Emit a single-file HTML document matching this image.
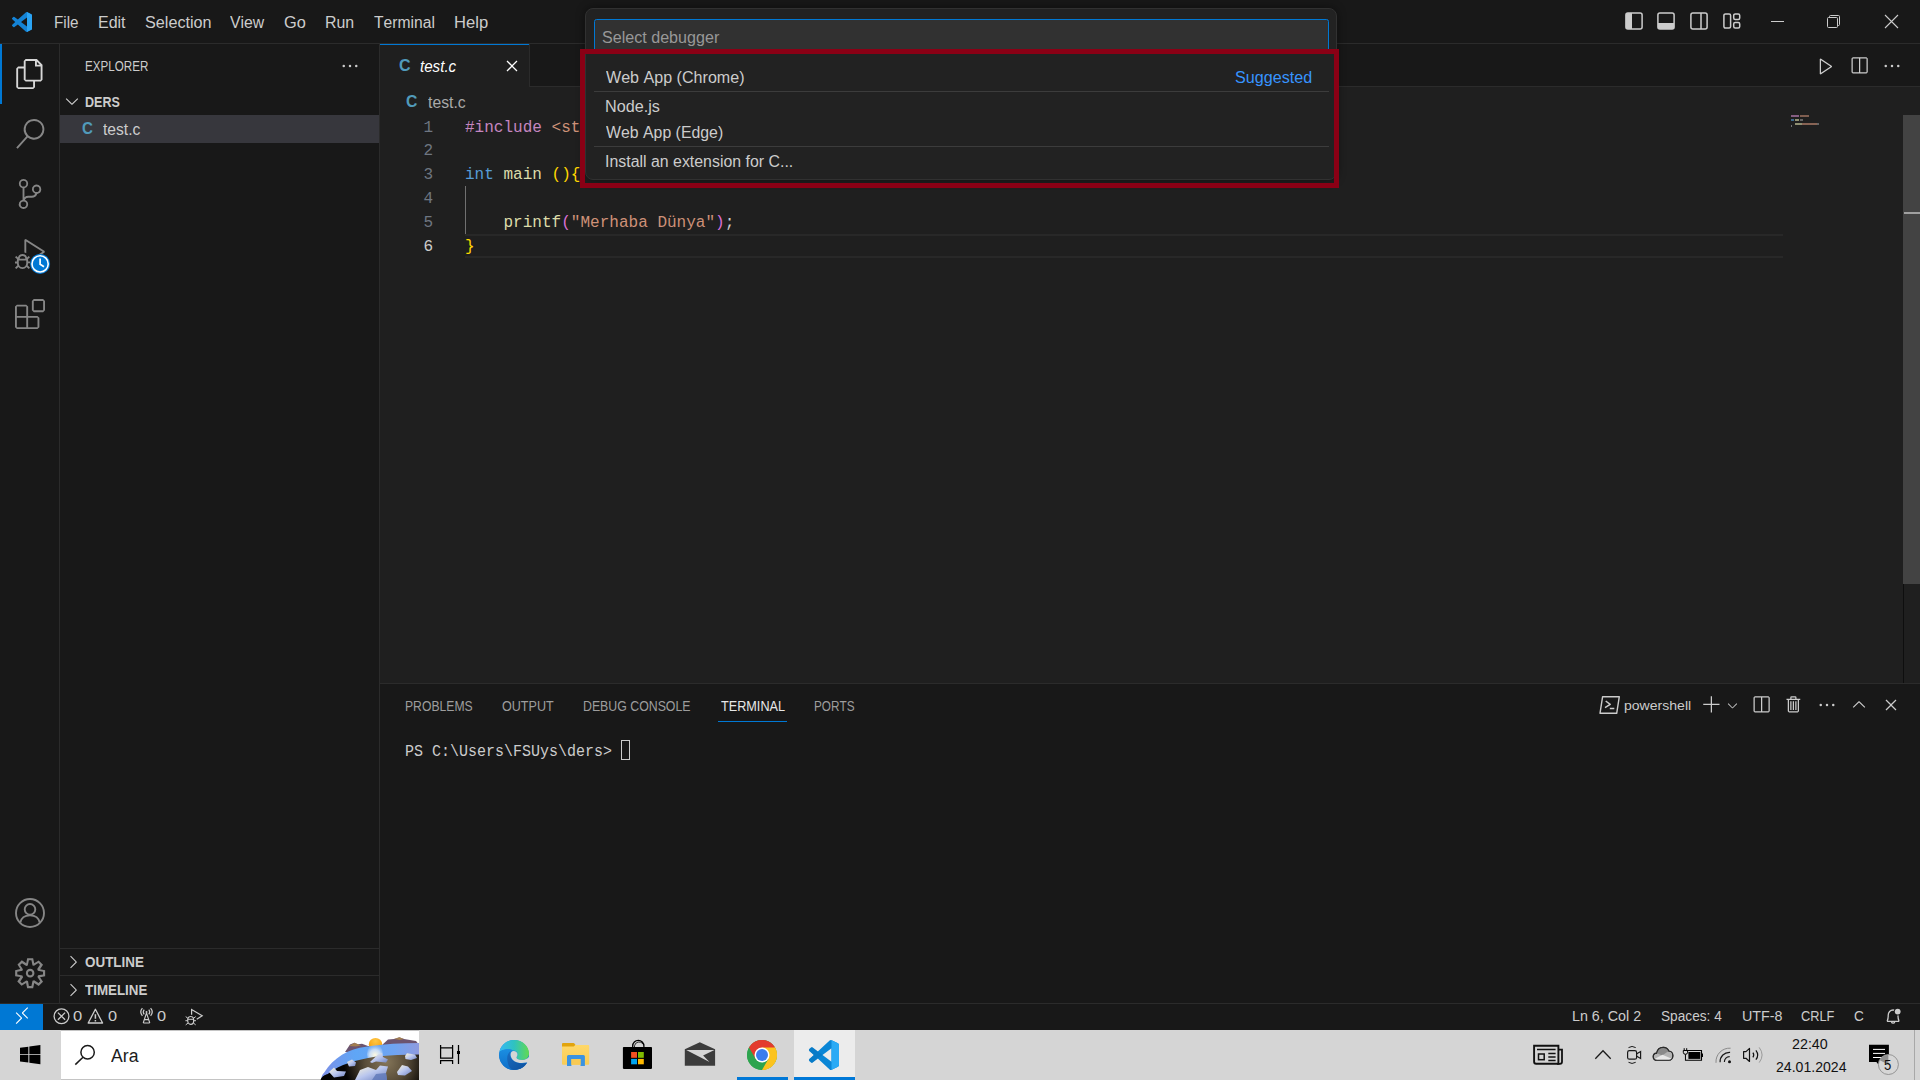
<!DOCTYPE html>
<html>
<head>
<meta charset="utf-8">
<title>test.c - ders - Visual Studio Code</title>
<style>
html,body{margin:0;padding:0;}
body{width:1920px;height:1080px;overflow:hidden;background:#181818;position:relative;font-family:"Liberation Sans",sans-serif;font-kerning:none;font-variant-ligatures:none;}
.a{position:absolute;}
.t{position:absolute;white-space:pre;line-height:24px;height:24px;transform-origin:0 0;}
.m{position:absolute;white-space:pre;line-height:24px;height:24px;transform-origin:0 0;font-family:"Liberation Mono",monospace;font-size:16.8px;transform:scaleX(0.955);color:#cccccc;}
.ln{position:absolute;white-space:pre;line-height:24px;height:24px;transform-origin:100% 0;font-family:"Liberation Mono",monospace;font-size:16.8px;transform:scaleX(0.955);color:#6e7681;text-align:right;width:40px;left:393.4px;}
.tm{position:absolute;white-space:pre;line-height:24px;height:24px;transform-origin:0 0;font-family:"Liberation Mono",monospace;font-size:16.6px;transform:scaleX(0.9036);color:#cccccc;}
svg{position:absolute;overflow:visible;}
</style>
</head>
<body>
<!-- ===== VS Code chrome ===== -->
<div class="a" style="left:0;top:0;width:1920px;height:43px;background:#181818;border-bottom:1px solid #2b2b2b;"></div>
<!-- activity bar -->
<div class="a" style="left:0;top:44px;width:59px;height:959px;background:#181818;border-right:1px solid #2b2b2b;"></div>
<div class="a" style="left:0;top:44px;width:2px;height:60px;background:#0078d4;"></div>
<!-- sidebar -->
<div class="a" style="left:60px;top:44px;width:319px;height:959px;background:#181818;border-right:1px solid #2b2b2b;"></div>
<div class="a" style="left:60px;top:115px;width:319px;height:28px;background:#37373d;"></div>
<div class="a" style="left:60px;top:948px;width:319px;height:1px;background:#2b2b2b;"></div>
<div class="a" style="left:60px;top:975px;width:319px;height:1px;background:#2b2b2b;"></div>
<!-- editor group -->
<div class="a" style="left:380px;top:44px;width:1540px;height:42px;background:#181818;border-bottom:1px solid #2b2b2b;"></div>
<div class="a" style="left:380px;top:44px;width:149px;height:43px;background:#1f1f1f;border-right:1px solid #2b2b2b;"></div>
<div class="a" style="left:380px;top:44px;width:149px;height:1px;background:#0078d4;"></div>
<div class="a" style="left:380px;top:87px;width:1540px;height:596px;background:#1f1f1f;"></div>
<!-- current line highlight -->
<div class="a" style="left:465px;top:234px;width:1318px;height:20px;border-top:2px solid #282828;border-bottom:2px solid #282828;"></div>
<!-- indent guide -->
<div class="a" style="left:465px;top:186px;width:1px;height:48px;background:#707070;"></div>
<!-- scrollbar -->
<div class="a" style="left:1903px;top:584px;width:1px;height:99px;background:#0e0e0e;"></div>
<div class="a" style="left:1903px;top:115px;width:17px;height:469px;background:#434343;"></div>
<div class="a" style="left:1904px;top:212px;width:16px;height:2px;background:#a0a0a0;"></div>
<!-- minimap -->
<div class="a" style="left:1791px;top:115px;width:8px;height:2px;background:#c586c0;opacity:.62"></div>
<div class="a" style="left:1800px;top:115px;width:9px;height:2px;background:#ce9178;opacity:.55"></div>
<div class="a" style="left:1791px;top:119px;width:3px;height:2px;background:#569cd6;opacity:.6"></div>
<div class="a" style="left:1795px;top:119px;width:4px;height:2px;background:#dcdcaa;opacity:.6"></div>
<div class="a" style="left:1800px;top:119px;width:3px;height:2px;background:#cccccc;opacity:.4"></div>
<div class="a" style="left:1795px;top:123px;width:7px;height:2px;background:#dcdcaa;opacity:.6"></div>
<div class="a" style="left:1802px;top:123px;width:15px;height:2px;background:#ce9178;opacity:.6"></div>
<div class="a" style="left:1817px;top:123px;width:2px;height:2px;background:#cccccc;opacity:.4"></div>
<div class="a" style="left:1791px;top:125px;width:1px;height:2px;background:#cccccc;opacity:.5"></div>

<!-- code -->
<div class="ln" style="top:115.5px;">1</div>
<div class="ln" style="top:139.25px;">2</div>
<div class="ln" style="top:163px;">3</div>
<div class="ln" style="top:186.75px;">4</div>
<div class="ln" style="top:210.5px;">5</div>
<div class="ln" style="top:234.75px;color:#cccccc;">6</div>
<div class="m" style="left:465px;top:115.5px;"><span style="color:#c586c0">#include</span> <span style="color:#ce9178">&lt;stdio.h&gt;</span></div>
<div class="m" style="left:465px;top:163px;"><span style="color:#569cd6">int</span> <span style="color:#dcdcaa">main</span> <span style="color:#ffd700">(){</span></div>
<div class="m" style="left:465px;top:210.5px;">    <span style="color:#dcdcaa">printf</span><span style="color:#da70d6">(</span><span style="color:#ce9178">"Merhaba Dünya"</span><span style="color:#da70d6">)</span>;</div>
<div class="m" style="left:465px;top:234.75px;"><span style="color:#ffd700">}</span></div>

<!-- panel -->
<div class="a" style="left:380px;top:683px;width:1540px;height:320px;background:#181818;border-top:1px solid #2b2b2b;box-sizing:border-box;"></div>
<div class="a" style="left:718px;top:721px;width:69px;height:1px;background:#0078d4;"></div>
<div class="tm" style="left:405px;top:739.5px;">PS C:\Users\FSUys\ders&gt; </div>
<div class="a" style="left:621px;top:740px;width:7px;height:18px;border:1px solid #cccccc;box-sizing:content-box;"></div>

<!-- status bar -->
<div class="a" style="left:0;top:1003px;width:1920px;height:27px;background:#181818;border-top:1px solid #2b2b2b;box-sizing:border-box;"></div>
<div class="a" style="left:0;top:1004px;width:43px;height:26px;background:#0078d4;"></div>

<!-- ===== quick pick ===== -->
<div class="a" style="left:585px;top:8px;width:752px;height:172px;background:#222222;border:1px solid #313131;border-radius:8px;box-sizing:border-box;box-shadow:0 0 10px rgba(0,0,0,.45);"></div>
<div class="a" style="left:594px;top:19px;width:735px;height:34px;background:#313131;border:1px solid #0078d4;border-radius:2.5px;box-sizing:border-box;"></div>
<div class="a" style="left:594px;top:91px;width:735px;height:1px;background:#3c3c3c;"></div>
<div class="a" style="left:594px;top:146px;width:735px;height:1px;background:#3c3c3c;"></div>
<!-- red annotation -->
<div class="a" style="left:580px;top:49px;width:759px;height:139px;border:5px solid #8a0015;box-sizing:border-box;"></div>

<!-- ===== Windows taskbar ===== -->
<div class="a" style="left:0;top:1030px;width:1920px;height:50px;background:#d5d5d5;"></div>
<div class="a" style="left:61px;top:1031px;width:358px;height:48px;background:#ffffff;"></div>
<div class="a" style="left:794px;top:1030px;width:61px;height:50px;background:#ececec;"></div>
<div class="a" style="left:794px;top:1077px;width:61px;height:3px;background:#0078d7;"></div>
<div class="a" style="left:737px;top:1077px;width:51px;height:3px;background:#0078d7;"></div>
<div class="a" style="left:1914px;top:1030px;width:1px;height:50px;background:#a8a8a8;"></div>

<!-- vscode logo title bar -->
<svg style="left:12px;top:12px" width="20" height="20" viewBox="0 0 100 100">
<path fill="#1483d6" d="M96.46 10.8L75.86.88a6.2 6.2 0 0 0-7.1 1.2L29.27 38.08 12.07 25.04a4.2 4.2 0 0 0-5.32.24L1.24 30.3a4.2 4.2 0 0 0 0 6.17L16.15 50 1.23 63.54a4.2 4.2 0 0 0 0 6.17l5.52 5.02a4.2 4.2 0 0 0 5.32.24l17.2-13.05 39.48 36a6.2 6.2 0 0 0 7.1 1.2l20.62-9.92A6.25 6.25 0 0 0 100 83.56V16.44c0-2.4-1.370-4.600-3.540-5.640zM75.020 72.700L45.060 50l29.960-22.700v45.400z"/>
<path fill="#2ba4f4" d="M75.02 27.3V.6l21.44 10.2c2.170 1.040 3.540 3.240 3.540 5.640v67.120c0 2.400-1.360 4.600-3.530 5.640L75.020 99.400V72.700z"/>
</svg>
<!-- activity bar icons (codicons 24 -> 30px) -->
<svg style="left:15px;top:59px" width="30" height="30" viewBox="0 0 24 24"><path fill="#d7d7d7" d="M17.5 0h-9L7 1.5V6H2.500L1 7.500v15.070L2.500 24h12.070L16 22.570V18h4.700l1.300-1.430V4.500L17.500 0zm0 2.120l2.380 2.380H17.500V2.120zm-3 20.380h-12v-15H7v9.070L8.500 18h6v4.500zm6-6h-12v-15H16V6h4.500v10.500z"/></svg>
<svg style="left:15px;top:119px" width="30" height="30" viewBox="0 0 24 24"><path fill="#868686" d="M15.250 0a8.250 8.250 0 0 0-6.180 13.720L1 22.880l1.120 1 8.050-9.120A8.251 8.251 0 1 0 15.250.010V0zm0 15a6.750 6.750 0 1 1 0-13.500 6.750 6.750 0 0 1 0 13.500z"/></svg>
<svg style="left:15px;top:179px" width="30" height="30" viewBox="0 0 24 24"><path fill="#868686" d="M21.007 8.222A3.738 3.738 0 0 0 15.045 5.200a3.737 3.737 0 0 0 1.156 6.583 2.988 2.988 0 0 1-2.668 1.670h-2.990a4.456 4.456 0 0 0-2.989 1.165V7.400a3.737 3.737 0 1 0-1.494 0v9.117a3.776 3.776 0 1 0 1.816.099 2.990 2.990 0 0 1 2.668-1.667h2.990a4.484 4.484 0 0 0 4.223-3.039 3.736 3.736 0 0 0 3.250-3.687zM4.565 3.738a2.242 2.242 0 1 1 4.484 0 2.242 2.242 0 0 1-4.484 0zm4.484 16.441a2.242 2.242 0 1 1-4.484 0 2.242 2.242 0 0 1 4.484 0zm8.221-9.715a2.242 2.242 0 1 1 0-4.485 2.242 2.242 0 0 1 0 4.485z"/></svg>
<svg style="left:15px;top:239px" width="30" height="30" viewBox="0 0 24 24"><path fill="#868686" d="M10.940 13.500l-1.320 1.320a3.730 3.730 0 0 0-7.240 0L1.060 13.500 0 14.560l1.720 1.720-.220.220V18H0v1.500h1.500v.080c.077.489.214.966.410 1.420L0 22.940 1.060 24l1.650-1.650A4.308 4.308 0 0 0 6 24a4.310 4.310 0 0 0 3.290-1.650L10.940 24 12 22.940 10.090 21c.198-.464.336-.951.410-1.450v-.100H12V18h-1.500v-1.500l-.220-.220L12 14.560l-1.060-1.060zM6 13.500a2.250 2.250 0 0 1 2.250 2.250h-4.500A2.250 2.250 0 0 1 6 13.500zm3 6a3.330 3.330 0 0 1-3 3 3.330 3.330 0 0 1-3-3v-2.250h6v2.250zm14.760-9.900v1.260L13.500 17.370V15.600l8.500-5.370L9 2v9.460a5.070 5.070 0 0 0-1.500-.720V.630L8.640 0l15.120 9.600z"/></svg>
<!-- debug badge (clock) -->
<svg style="left:29px;top:253px" width="22" height="22" viewBox="0 0 22 22"><circle cx="11.100" cy="10.900" r="10" fill="#0078d4"/><circle cx="11.100" cy="10.900" r="8.100" fill="none" stroke="#ffffff" stroke-width="1.600"/><path d="M11.100 5.600V11.300L15 13.800" fill="none" stroke="#ffffff" stroke-width="1.700"/></svg>
<svg style="left:15px;top:299px" width="30" height="30" viewBox="0 0 24 24"><path fill="#868686" d="M13.500 1.500L15 0h7.500L24 1.500V9l-1.500 1.500H15L13.500 9V1.500zm1.500 0V9h7.500V1.500H15zM0 15V6l1.500-1.500H9L10.500 6v7.500H18l1.500 1.500v7.500L18 24H1.500L0 22.500V15zm9-1.500V6H1.500v7.500H9zM9 15H1.500v7.500H9V15zm1.500 7.500H18V15h-7.500v7.500z"/></svg>
<!-- account -->
<svg style="left:15px;top:898px" width="30" height="30" viewBox="0 0 30 30" fill="none" stroke="#868686" stroke-width="1.900"><circle cx="15" cy="15" r="14"/><circle cx="15" cy="11.300" r="5.300"/><path d="M5.300 24.600C6.300 19.700 10 17.400 15 17.400s8.700 2.300 9.700 7.200"/></svg>
<!-- settings gear -->
<svg style="left:12.850px;top:955.850px" width="34.300" height="34.300" viewBox="0 0 16 16"><path fill="#868686" d="M9.100 4.400L8.600 2H7.400l-.500 2.400-.700.300-2-1.300-.900.800 1.300 2-.200.700-2.400.500v1.200l2.400.500.300.800-1.300 2 .800.800 2-1.300.800.300.400 2.300h1.200l.500-2.400.800-.300 2 1.300.800-.800-1.300-2 .300-.800 2.300-.400V7.400l-2.400-.500-.300-.800 1.300-2-.800-.800-2 1.300-.700-.200zM9.400 1l.500 2.400L12 2.100l2 2-1.400 2.100 2.400.400v2.800l-2.400.500L14 12l-2 2-2.100-1.400-.500 2.400H6.600l-.500-2.400L4 13.900l-2-2 1.400-2.100L1 9.400V6.600l2.400-.500L2.100 4l2-2 2.100 1.400.400-2.400h2.800zm.600 7c0 1.100-.900 2-2 2s-2-.900-2-2 .900-2 2-2 2 .900 2 2zM8 9c.600 0 1-.400 1-1s-.400-1-1-1-1 .400-1 1 .400 1 1 1z"/></svg>
<!-- sidebar ... -->
<svg style="left:340px;top:56px" width="20" height="20" viewBox="0 0 16 16"><path fill="#cccccc" d="M4 8a1 1 0 1 1-2 0 1 1 0 0 1 2 0zm5 0a1 1 0 1 1-2 0 1 1 0 0 1 2 0zm5 0a1 1 0 1 1-2 0 1 1 0 0 1 2 0z"/></svg>
<!-- chevrons -->
<svg style="left:62px;top:90.500px" width="20" height="20" viewBox="0 0 16 16"><path fill="#cccccc" d="M7.976 10.072l4.357-4.357.620.618L8.284 11h-.618L3 6.333l.619-.618 4.357 4.357z"/></svg>
<svg style="left:62.500px;top:952px" width="20" height="20" viewBox="0 0 16 16"><path fill="#cccccc" d="M10.072 8.024L5.715 3.667l.618-.620L11 7.716v.618L6.333 13l-.618-.619 4.357-4.357z"/></svg>
<svg style="left:62.500px;top:980px" width="20" height="20" viewBox="0 0 16 16"><path fill="#cccccc" d="M10.072 8.024L5.715 3.667l.618-.620L11 7.716v.618L6.333 13l-.618-.619 4.357-4.357z"/></svg>
<!-- title bar layout controls -->
<svg style="left:1625px;top:12px" width="18" height="18" viewBox="0 0 18 18"><rect x="0.900" y="0.900" width="16.200" height="16.200" rx="2" fill="none" stroke="#cccccc" stroke-width="1.500"/><path d="M1 2.500Q1 1 2.500 1H7V17H2.500Q1 17 1 15.500z" fill="#cccccc"/></svg>
<svg style="left:1657px;top:12px" width="18" height="18" viewBox="0 0 18 18"><rect x="0.900" y="0.900" width="16.200" height="16.200" rx="2" fill="none" stroke="#cccccc" stroke-width="1.500"/><path d="M1 11H17V15.500Q17 17 15.500 17H2.500Q1 17 1 15.500z" fill="#cccccc"/></svg>
<svg style="left:1690px;top:12px" width="18" height="18" viewBox="0 0 18 18"><rect x="0.900" y="0.900" width="16.200" height="16.200" rx="2" fill="none" stroke="#cccccc" stroke-width="1.500"/><path d="M11 1V17" stroke="#cccccc" stroke-width="1.500"/></svg>
<svg style="left:1723px;top:13px" width="18" height="16" viewBox="0 0 18 16" fill="none" stroke="#cccccc" stroke-width="1.500"><rect x="0.900" y="0.900" width="6.700" height="14.200" rx="1.500"/><rect x="10.700" y="0.900" width="6" height="5.500" rx="1.500"/><rect x="10.700" y="9.600" width="6" height="5.500" rx="1.500"/></svg>
<!-- window controls -->
<div class="a" style="left:1771px;top:21px;width:13px;height:1px;background:#cccccc;"></div>
<svg style="left:1827px;top:15px" width="13" height="13" viewBox="0 0 13 13" fill="none" stroke="#cccccc" stroke-width="1"><rect x="0.500" y="2.500" width="10" height="10" rx="1"/><path d="M2.500 2.500V1.500Q2.500 .500 3.500 .500H11.500Q12.500 .500 12.500 1.500V9.500Q12.500 10.500 11.500 10.500H10.500"/></svg>
<svg style="left:1885px;top:15px" width="13" height="13" viewBox="0 0 13 13" fill="none" stroke="#cccccc" stroke-width="1.100"><path d="M0 0L13 13M13 0L0 13"/></svg>
<!-- tab close -->
<svg style="left:501.500px;top:56px" width="20" height="20" viewBox="0 0 16 16"><path fill="#ffffff" d="M8 8.707l3.646 3.647.708-.707L8.707 8l3.647-3.646-.707-.708L8 7.293 4.354 3.646l-.707.708L7.293 8l-3.646 3.646.707.708L8 8.707z"/></svg>
<!-- editor actions -->
<svg style="left:1816px;top:56px" width="20" height="20" viewBox="0 0 16 16"><path fill="#cccccc" d="M3.780 2L3 2.410v12l.780.420 9-6V8l-9-6zM4 13.480V3.350l7.600 5.070L4 13.480z"/></svg>
<svg style="left:1849px;top:55.500px" width="20" height="20" viewBox="0 0 16 16"><path fill="#cccccc" d="M14 1H3L2 2v11l1 1h11l1-1V2l-1-1zM8 13H3V2h5v11zm6 0H9V2h5v11z"/></svg>
<svg style="left:1881.500px;top:56px" width="20" height="20" viewBox="0 0 16 16"><path fill="#cccccc" d="M4 8a1 1 0 1 1-2 0 1 1 0 0 1 2 0zm5 0a1 1 0 1 1-2 0 1 1 0 0 1 2 0zm5 0a1 1 0 1 1-2 0 1 1 0 0 1 2 0z"/></svg>
<!-- panel actions -->
<svg style="left:1599px;top:695px" width="22" height="20" viewBox="0 0 22 20" fill="none" stroke="#cccccc" stroke-width="1.400" stroke-linejoin="round"><path d="M3.600 1.700H20.300L17.700 18.300H1z"/><path d="M6.700 6L11.200 9.300L6 12.600M10.800 13.400H15.300" stroke-width="1.500"/></svg>
<svg style="left:1702px;top:694.500px" width="20" height="20" viewBox="0 0 16 16"><path fill="#cccccc" d="M14 7v1H8v6H7V8H1V7h6V1h1v6h6z"/></svg>
<svg style="left:1724.500px;top:697.500px" width="15" height="15" viewBox="0 0 16 16"><path fill="#cccccc" d="M7.976 10.072l4.357-4.357.620.618L8.284 11h-.618L3 6.333l.619-.618 4.357 4.357z"/></svg>
<svg style="left:1750.800px;top:694.500px" width="20" height="20" viewBox="0 0 16 16"><path fill="#cccccc" d="M14 1H3L2 2v11l1 1h11l1-1V2l-1-1zM8 13H3V2h5v11zm6 0H9V2h5v11z"/></svg>
<svg style="left:1784px;top:695px" width="20" height="20" viewBox="0 0 16 16"><path fill="#cccccc" d="M10 3h3v1h-1v9l-1 1H4l-1-1V4H2V3h3V2a1 1 0 0 1 1-1h3a1 1 0 0 1 1 1v1zM9 2H6v1h3V2zM4 13h7V4H4v9zm2-8H5v7h1V5zm1 0h1v7H7V5zm2 0h1v7H9V5z"/></svg>
<svg style="left:1816.500px;top:695px" width="20" height="20" viewBox="0 0 16 16"><path fill="#cccccc" d="M4 8a1 1 0 1 1-2 0 1 1 0 0 1 2 0zm5 0a1 1 0 1 1-2 0 1 1 0 0 1 2 0zm5 0a1 1 0 1 1-2 0 1 1 0 0 1 2 0z"/></svg>
<svg style="left:1849px;top:694.500px" width="20" height="20" viewBox="0 0 16 16"><path fill="#cccccc" d="M8.024 5.928l-4.357 4.357-.620-.618L7.716 5h.618L13 9.667l-.619.618-4.357-4.357z"/></svg>
<svg style="left:1881px;top:695px" width="20" height="20" viewBox="0 0 16 16"><path fill="#cccccc" d="M8 8.707l3.646 3.647.708-.707L8.707 8l3.647-3.646-.707-.708L8 7.293 4.354 3.646l-.707.708L7.293 8l-3.646 3.646.707.708L8 8.707z"/></svg>
<!-- status bar icons -->
<svg style="left:11.500px;top:1005.500px" width="20" height="20" viewBox="0 0 16 16"><path fill="#ffffff" d="M12.904 9.570L8.928 5.596l3.976-3.976-.619-.620L8 5.286v.619l4.285 4.285.620-.618zM3 5.620l4.072 4.050L3 13.745l.619.619L8 10v-.619L3.619 5 3 5.620z"/></svg>
<svg style="left:53px;top:1008px" width="17" height="17" viewBox="0 0 17 17" fill="none" stroke="#cccccc" stroke-width="1.300"><circle cx="8.500" cy="8.200" r="7.400"/><path d="M4.900 4.600L12.100 11.800M12.100 4.600L4.900 11.800"/></svg>
<svg style="left:87px;top:1007.500px" width="17" height="17" viewBox="0 0 17 17" fill="none" stroke="#cccccc" stroke-width="1.300" stroke-linejoin="round"><path d="M8.400 1.300L15.600 15H1.200z"/><path d="M8.400 6.300V10.800M8.400 11.900V13.400" stroke-width="1.500"/></svg>
<svg style="left:137.500px;top:1007px" width="17" height="17" viewBox="0 0 17 17" fill="none" stroke="#cccccc" stroke-width="1.200"><path d="M4.400 1.200Q1.100 5 4.400 8.800M12.600 1.200Q15.900 5 12.600 8.800M6.200 2.600Q4.300 5 6.200 7.400M10.800 2.600Q12.700 5 10.800 7.400"/><circle cx="8.500" cy="5" r="1" fill="#cccccc" stroke="none"/><path d="M8.500 6L5.200 16M8.500 6L11.800 16M6.300 12.600H10.700M5.200 16H11.800" stroke-width="1.100"/></svg>
<svg style="left:185px;top:1008px" width="19" height="18" viewBox="0 0 19 18" fill="none" stroke="#cccccc" stroke-width="1.200"><path d="M6.600 6.800V1.500L17.200 7.800L11.700 11.200"/><ellipse cx="5.700" cy="12.400" rx="3" ry="3.900"/><path d="M2.800 11.300H8.600M.700 8.600L2.900 10.300M10.700 8.600L8.500 10.300M.400 12.700H2.700M8.700 12.700H11M.700 16.900L3 15M10.700 16.900L8.400 15" stroke-width="1"/></svg>
<svg style="left:1884.500px;top:1007.500px" width="17" height="18" viewBox="0 0 17 18"><path d="M2.300 12.800C3.300 10.600 3.200 9.300 3.200 7.300C3.200 4.200 5.300 2 8.100 2C10.900 2 13 4.200 13 7.300C13 9.300 12.900 10.600 13.900 12.800L13.600 13.400H2.600z" fill="none" stroke="#cccccc" stroke-width="1.300" stroke-linejoin="round"/><path d="M6.400 14A1.800 1.800 0 0 0 9.800 14" fill="none" stroke="#cccccc" stroke-width="1.200"/><circle cx="12.700" cy="3.600" r="3.900" fill="#181818"/><circle cx="12.700" cy="3.600" r="2.900" fill="#cccccc"/></svg>
<!-- windows start -->
<svg style="left:19.800px;top:1045.400px" width="20.400" height="19.200" viewBox="0 0 87.300 87.600" preserveAspectRatio="none"><path fill="#000000" d="M0 12.500L35.700 7.600V42.100H0zM40 6.900L87.300 0V41.800H40zM0 45.700H35.700V80.300L0 75.300zM40 46H87.300V87.600L40 80.900z"/></svg>
<!-- search glass -->
<svg style="left:74px;top:1043px" width="24" height="24" viewBox="0 0 24 24" fill="none" stroke="#1a1a1a" stroke-width="1.500"><circle cx="13.600" cy="9.200" r="6.700"/><path d="M9 14.200L1.300 21.600"/></svg>
<!-- search box borders -->
<div class="a" style="left:61px;top:1030px;width:358px;height:1px;background:#c4c4c4;"></div>
<div class="a" style="left:61px;top:1079px;width:358px;height:1px;background:#c4c4c4;"></div>
<!-- scenic search highlight -->
<svg style="left:319px;top:1031px" width="100" height="48" viewBox="319 1031 100 48">
<defs>
<linearGradient id="gsky" x1="0" y1="0" x2="1" y2="0"><stop offset="0" stop-color="#7d8fe6"/><stop offset=".35" stop-color="#5fa6f6"/><stop offset=".75" stop-color="#6fa4f2"/><stop offset="1" stop-color="#8f9be0"/></linearGradient>
<radialGradient id="gglow" cx="375" cy="1055" r="11" gradientUnits="userSpaceOnUse"><stop offset="0" stop-color="#fffbe0"/><stop offset=".5" stop-color="#dfeaf6" stop-opacity=".8"/><stop offset="1" stop-color="#9cc4f6" stop-opacity="0"/></radialGradient>
<radialGradient id="ggrd" cx="386" cy="1062" r="42" gradientUnits="userSpaceOnUse"><stop offset="0" stop-color="#85765a"/><stop offset=".5" stop-color="#584c38"/><stop offset="1" stop-color="#060504"/></radialGradient>
<radialGradient id="gsun" cx="375.500" cy="1041" r="8" gradientUnits="userSpaceOnUse"><stop offset="0" stop-color="#ffc845"/><stop offset="1" stop-color="#f7a212"/></radialGradient>
<linearGradient id="gice" x1="0" y1="0" x2="1" y2="1"><stop offset="0" stop-color="#fdf6d8"/><stop offset=".5" stop-color="#b9c6ee"/><stop offset="1" stop-color="#6f82c0"/></linearGradient>
</defs>
<path d="M345 1052L350 1044.500L354.400 1042.700L358 1044.300L362 1043.700L368 1046L372 1046L372 1053z" fill="#6c5470"/>
<path d="M349 1046L354.400 1042.700L358 1044.300L361 1045.500L356 1046.500z" fill="#b08848" opacity=".8"/>
<path d="M381 1046L388 1039.500L394 1039L399.400 1037.300L404 1039L410 1040L416 1041L418 1043.500L419 1046z" fill="#6c5470"/>
<path d="M394 1039L399.400 1037.300L404 1039L400 1040z" fill="#b08848" opacity=".8"/>
<circle cx="375.500" cy="1044.600" r="6.700" fill="url(#gsun)"/>
<path d="M321 1080C321.500 1076 322.500 1074 324.400 1072.200C333 1058 349 1048.500 366 1046.700C384 1044 402 1043.200 419 1043.100V1080z" fill="url(#gsky)"/>
<ellipse cx="375" cy="1054" rx="8" ry="10" fill="url(#gglow)"/>
<path d="M320.600 1080C321.500 1077 324 1075 328 1074C340 1064 356 1060 375 1056.700C390 1055.300 405 1054.800 419 1054.600V1080z" fill="url(#ggrd)"/>
<path d="M320.600 1080C321.500 1077 324 1075 328 1074L333 1070L331 1080z" fill="#000000" opacity=".75"/>
<!-- ice -->
<path d="M370 1062L378 1054.500L382 1053L383 1057L388 1059.500L386 1062.500L376 1061.500L372 1063z" fill="url(#gice)"/>
<path d="M347 1062L352 1059.500L356 1062.500L355 1066L349 1066.500z" fill="url(#gice)"/>
<path d="M405 1056L407 1053.300L415 1054.500L417 1058L411 1060L405.500 1059z" fill="url(#gice)"/>
<path d="M329 1072L334 1067.500L337 1071L346 1071.500L344 1076L334 1077.500z" fill="url(#gice)"/>
<path d="M355 1080L360 1070L368 1067L376 1070L380 1065.500L388 1066.500L386 1073L387 1080z" fill="url(#gice)"/>
<path d="M372 1080L376 1074L386 1073L387 1080z" fill="#5f78b8" opacity=".8"/>
<path d="M397 1072L402 1065L408 1066.500L412 1071L405 1075.500L398 1075z" fill="url(#gice)"/>
</svg>
<!-- task view -->
<svg style="left:439px;top:1044px" width="22" height="21" viewBox="439 1044 22 21" fill="none" stroke="#000000" stroke-width="1.250"><path d="M440.600 1045V1047.800M452.600 1045V1047.800M440.600 1047.900H452.600V1058H440.600zM440.600 1064V1060.600H452.600V1064M458.500 1045V1064"/><rect x="457" y="1051" width="3" height="3" fill="#000000" stroke="none"/></svg>
<!-- edge -->
<svg style="left:499px;top:1040px" width="30" height="30" viewBox="0 0 30 30">
<defs>
<linearGradient id="ge1" x1="0" y1="0" x2="1" y2="0"><stop offset="0" stop-color="#35b8f4"/><stop offset=".5" stop-color="#2fc2c0"/><stop offset="1" stop-color="#62da50"/></linearGradient>
<linearGradient id="ge2" x1="0" y1="0" x2="0" y2="1"><stop offset="0" stop-color="#1b8fe2"/><stop offset="1" stop-color="#0f6ec8"/></linearGradient>
<linearGradient id="ge3" x1="0" y1="0" x2="1" y2="1"><stop offset="0" stop-color="#1a6cc0"/><stop offset="1" stop-color="#0c4f9c"/></linearGradient>
</defs>
<circle cx="15" cy="15" r="15" fill="url(#ge2)"/>
<path d="M.400 12C1.800 5 7.800 0 15 0C23.500 0 30 6.300 30 13.300C30 17.400 27 20 23.200 20C19.500 20 17.600 18.600 17.600 17.500C17.600 16.600 18.600 16.300 18.600 14.200C18.600 12 16.600 10.400 14 10.400C8 9 2 10 .400 12z" fill="url(#ge1)"/>
<path d="M8.200 18.500C8.200 13.500 11 10.400 14 10.400C10 7.500 1 9.500 .300 13.500C-.500 22 6 30 15 30C21.500 30 25.800 26.500 28 22.800C24 25 18 25.500 14.500 24.500C10.500 23.300 8.200 21.500 8.200 18.500z" fill="url(#ge2)"/>
<path d="M8.200 18.500C8.200 15.300 9.500 13 11.200 11.600C10.300 14 10.800 17.500 13.500 20C17 23.200 23.500 24.300 28 22.800C25.800 26.500 21.500 30 15 30C10 29.500 8.200 23 8.200 18.500z" fill="url(#ge3)"/>
<path d="M11.600 14.600C11.600 12.400 12.700 10.900 14.600 10.900C16.800 10.900 18.500 12.300 18.500 14.200C18.500 16.200 17.500 16.600 17.500 17.500C17.500 18.800 19.700 20 23.200 20C26 20 28.600 18.800 30.500 16.500L31 20.800C27 23.800 19 23.600 15.500 21.300C12.600 19.500 11.600 17 11.600 14.600z" fill="#d6d6d6"/>
</svg>
<!-- folder -->
<svg style="left:562px;top:1043px" width="28" height="24" viewBox="562 1043 28 24">
<defs><linearGradient id="gfo" x1="0" y1="0" x2="0" y2="1"><stop offset="0" stop-color="#ffd869"/><stop offset="1" stop-color="#f9cc56"/></linearGradient></defs>
<path d="M562 1044Q562 1043.100 563 1043.100H573.500Q574.200 1043.100 574.800 1044L575.500 1045V1047H562z" fill="#e2a40d"/>
<path d="M562 1046.600H573.800L575.300 1045H588.300Q589.200 1045 589.200 1046V1063.800Q589.200 1064.700 588.300 1064.700H563Q562 1064.700 562 1063.800z" fill="url(#gfo)"/>
<path d="M567 1066.100V1056.600Q567 1055.100 568.500 1055.100H583.400Q584.900 1055.100 584.900 1056.600V1066.100H580.500V1059H571.400V1066.100z" fill="#3b93e1"/>
<rect x="571.400" y="1059" width="9.100" height="5.700" fill="#f8ca55"/>
</svg>
<!-- store -->
<svg style="left:622px;top:1039px" width="31" height="31" viewBox="622 1039 31 31">
<path d="M632.700 1047V1046A5.600 5.600 0 0 1 643.900 1046V1047" fill="none" stroke="#000000" stroke-width="1.300"/>
<path d="M634.500 1047V1045.800A4.700 4.700 0 0 1 643 1044" fill="none" stroke="#000000" stroke-width=".800"/>
<rect x="622.900" y="1047" width="29.100" height="21.900" rx=".800" fill="#000000"/>
<rect x="631.100" y="1052" width="5.900" height="5.800" fill="#f25022"/><rect x="638" y="1052" width="5.800" height="5.800" fill="#7fba00"/>
<rect x="631.100" y="1058.900" width="5.900" height="5.400" fill="#00a4ef"/><rect x="638" y="1058.900" width="5.800" height="5.400" fill="#ffb900"/>
</svg>
<!-- mail -->
<svg style="left:684px;top:1041px" width="32" height="26" viewBox="684 1041 32 26">
<path d="M684.800 1049.200L699.800 1042.200L715.100 1049.200V1065.800H684.800z" fill="#3c3c3c"/>
<path d="M686.200 1050.100H714.400L703.100 1055.600L709.500 1061.900z" fill="#d6d6d6"/>
</svg>
<!-- chrome -->
<svg style="left:747px;top:1040px" width="30" height="30" viewBox="-15 -15 30 30">
<circle r="15" fill="#2da44e"/>
<path d="M0 0L-12.990 -7.500A15 15 0 0 1 12.990 -7.500z" fill="#e33b2e"/>
<path d="M-12.990 -7.500A15 15 0 0 1 12.990 -7.500H0z" fill="#e33b2e"/>
<path d="M12.990 -7.500A15 15 0 0 1 0 15L0 0z" fill="#fcc31e"/>
<path d="M0 15A15 15 0 0 1 -12.990 -7.500L0 0z" fill="#2da44e"/>
<path d="M12.990 -7.500H0L6.500 3.750L0 15A15 15 0 0 0 12.990 -7.500z" fill="#fcc31e"/>
<path d="M-12.990 -7.500L-6.500 3.750L0 15L6.500 3.750H-6.500z" fill="#2da44e"/>
<path d="M-12.990 -7.500L-6.500 3.750L0 -7.500z" fill="#e33b2e"/>
<circle r="7.500" fill="#ffffff"/>
<circle r="6" fill="#3b7ded"/>
</svg>
<!-- vscode taskbar -->
<svg style="left:809px;top:1040px" width="30" height="30" viewBox="0 0 100 100">
<path fill="#0a86d6" d="M96.460 10.800L75.860.880a6.200 6.200 0 0 0-7.100 1.200L29.270 38.080 12.070 25.040a4.200 4.200 0 0 0-5.320.240L1.240 30.300a4.200 4.200 0 0 0 0 6.170L16.150 50 1.230 63.540a4.200 4.200 0 0 0 0 6.170l5.520 5.020a4.200 4.200 0 0 0 5.320.240l17.200-13.050 39.480 36a6.200 6.200 0 0 0 7.100 1.200l20.620-9.920A6.250 6.250 0 0 0 100 83.560V16.440c0-2.400-1.370-4.600-3.540-5.640zM75.020 72.700L45.060 50l29.960-22.700v45.400z"/>
<path fill="#0572bd" d="M1.240 30.300l5.510-5.020a4.200 4.200 0 0 1 5.320-.240L45.060 50 29.270 61.920 12.070 74.960a4.200 4.200 0 0 1-5.320-.240L1.230 69.700a4.200 4.200 0 0 1 0-6.170L16.150 50 1.240 36.470a4.200 4.200 0 0 1 0-6.170z" opacity=".55"/>
<path fill="#2aaaf5" d="M75.020 27.300V.6l21.440 10.200c2.170 1.040 3.540 3.240 3.540 5.640v67.120c0 2.400-1.360 4.600-3.530 5.640L75.020 99.400V72.700z"/>
</svg>
<!-- news -->
<svg style="left:1532px;top:1044px" width="32" height="22" viewBox="1532 1044 32 22" fill="none" stroke="#111111">
<path d="M1534.100 1045.800H1558.400V1063.800H1536.100Q1534.100 1063.800 1534.100 1061.800z" stroke-width="1.900"/>
<path d="M1558.400 1049.700H1562V1061.800Q1562 1063.800 1560 1063.800H1557" stroke-width="1.800"/>
<path d="M1537 1049.500H1555.600" stroke-width="1.500"/>
<rect x="1538.500" y="1054" width="5.700" height="5.700" stroke-width="1.500"/>
<path d="M1548.300 1053.500H1555.600M1548.300 1057H1555.600M1548.300 1060.500H1555.600" stroke-width="1.400"/>
</svg>
<!-- chevron up -->
<svg style="left:1594px;top:1049px" width="18" height="11" viewBox="1594 1049 18 11"><path d="M1595.300 1058.700L1603 1050.800L1610.700 1058.700" fill="none" stroke="#1a1a1a" stroke-width="1.300"/></svg>
<!-- meet now -->
<svg style="left:1625px;top:1044px" width="18" height="21" viewBox="1625 1044 18 21" fill="none" stroke="#1a1a1a" stroke-width="1.200">
<rect x="1627.600" y="1050.700" width="9" height="8.500" rx="1.800"/>
<path d="M1636.800 1053.700L1640.600 1051.500V1058.400L1636.800 1056.200"/>
<path d="M1628.500 1047.600Q1632 1045.300 1635.700 1047.600M1628.500 1062.300Q1632 1064.600 1635.700 1062.300" stroke-width="1"/>
</svg>
<!-- onedrive -->
<svg style="left:1652px;top:1046px" width="22" height="16" viewBox="1652 1046 22 16">
<path d="M1657.200 1060.300C1654.800 1060.300 1653.200 1058.700 1653.200 1056.700C1653.200 1054.700 1654.700 1053.200 1656.600 1053.100C1657.300 1050 1659.900 1047.400 1663.200 1047.400C1665.700 1047.400 1667.800 1048.800 1668.800 1051C1671.100 1051 1672.900 1053 1672.900 1055.700C1672.900 1058.300 1671.100 1060.300 1668.800 1060.300z" fill="#b4b4b4" stroke="#2a2a2a" stroke-width="1.100"/>
<path d="M1656.600 1053.100C1657.300 1050 1659.900 1047.400 1663.200 1047.400C1665.700 1047.400 1667.800 1048.800 1668.800 1051L1662 1055.500z" fill="#8a8a8a"/>
<path d="M1654.500 1059L1662.500 1054.700L1671.800 1058.800C1671 1059.700 1670 1060.300 1668.800 1060.300H1657.200C1656 1060.300 1655.100 1059.800 1654.500 1059z" fill="#e8e8e8"/>
<path d="M1657.200 1060.300C1654.800 1060.300 1653.200 1058.700 1653.200 1056.700C1653.200 1054.700 1654.700 1053.200 1656.600 1053.100C1657.300 1050 1659.900 1047.400 1663.200 1047.400C1665.700 1047.400 1667.800 1048.800 1668.800 1051C1671.100 1051 1672.900 1053 1672.900 1055.700C1672.900 1058.300 1671.100 1060.300 1668.800 1060.300z" fill="none" stroke="#2a2a2a" stroke-width="1.100"/>
</svg>
<!-- battery -->
<svg style="left:1682px;top:1047px" width="22" height="15" viewBox="1682 1047 22 15" fill="none" stroke="#000000">
<path d="M1684.200 1048.200V1050.500M1686.700 1048.200V1050.500" stroke-width="1"/>
<path d="M1683.300 1050.500H1687.600V1052.300Q1687.600 1054.300 1685.450 1054.300Q1683.300 1054.300 1683.300 1052.300z" stroke-width="1"/>
<path d="M1685.450 1054.300V1060.800" stroke-width="1"/>
<path d="M1687 1050.500H1701.500V1060.300H1686" stroke-width="1.100"/>
<rect x="1688.400" y="1052" width="11.900" height="6.900" fill="#000000" stroke="none"/>
<path d="M1702.300 1053.600V1057.100" stroke-width="1.400"/>
</svg>
<!-- wifi -->
<svg style="left:1714px;top:1046px" width="19" height="19" viewBox="1714 1046 19 19" fill="none">
<circle cx="1729.500" cy="1061.700" r="1.500" fill="#111111"/>
<path d="M1724.400 1061.900A5.100 5.100 0 0 1 1729.700 1056.600" stroke="#1a1a1a" stroke-width="1.200"/>
<path d="M1720.100 1062.300A9.400 9.400 0 0 1 1730.100 1052.300" stroke="#1a1a1a" stroke-width="1.200"/>
<path d="M1716 1062.800A13.600 13.600 0 0 1 1730.600 1048.200" stroke="#8a8a8a" stroke-width="1"/>
</svg>
<!-- volume -->
<svg style="left:1742px;top:1046px" width="22" height="19" viewBox="1742 1046 22 19" fill="none" stroke="#111111" stroke-width="1.200" stroke-linejoin="round">
<path d="M1743.600 1051.600H1746L1749.500 1048.400V1061.500L1746 1058.300H1743.600z"/>
<path d="M1752.900 1052.700Q1754.600 1055 1752.900 1057.300"/>
<path d="M1755.900 1050.300Q1759.500 1055 1755.900 1059.700"/>
<path d="M1759.200 1047.400Q1765 1055 1759.200 1062.600" stroke="#9a9a9a" stroke-width="1"/>
</svg>
<!-- notification -->
<svg style="left:1868px;top:1044px" width="32" height="32" viewBox="1868 1044 32 32">
<path d="M1869 1044.800H1888.900V1062H1880.300L1878.400 1064.400L1876.400 1062H1869z" fill="#000000"/>
<path d="M1873 1049.400H1885M1873 1053.400H1885M1873 1057.500H1885" stroke="#ffffff" stroke-width="1"/>
<circle cx="1888.400" cy="1064.500" r="10" fill="#d6d6d6" stroke="#8c8c8c" stroke-width=".900"/>
<path d="M1888.400 1064.500L1888.400 1054.900A9.600 9.600 0 0 0 1879.800 1060.300z" fill="#8f8f8f"/>
</svg>

<div class="t" style="left:53.85px;top:10.50px;font-size:15.60px;color:#cccccc;transform:scaleX(0.9757);">File</div>
<div class="t" style="left:97.59px;top:10.50px;font-size:15.60px;color:#cccccc;transform:scaleX(1.0240);">Edit</div>
<div class="t" style="left:144.76px;top:10.50px;font-size:15.60px;color:#cccccc;transform:scaleX(1.0376);">Selection</div>
<div class="t" style="left:230.43px;top:10.50px;font-size:15.60px;color:#cccccc;transform:scaleX(1.0124);">View</div>
<div class="t" style="left:283.88px;top:10.50px;font-size:15.60px;color:#cccccc;transform:scaleX(1.0480);">Go</div>
<div class="t" style="left:325.09px;top:10.50px;font-size:15.60px;color:#cccccc;transform:scaleX(1.0218);">Run</div>
<div class="t" style="left:373.85px;top:10.50px;font-size:15.60px;color:#cccccc;transform:scaleX(1.0036);">Terminal</div>
<div class="t" style="left:453.74px;top:10.50px;font-size:15.60px;color:#cccccc;transform:scaleX(1.0647);">Help</div>
<div class="t" style="left:84.75px;top:53.80px;font-size:14.02px;color:#cccccc;transform:scaleX(0.8291);">EXPLORER</div>
<div class="t" style="left:84.86px;top:89.70px;font-size:14.02px;color:#cccccc;font-weight:bold;transform:scaleX(0.8944);">DERS</div>
<div class="t" style="left:103.06px;top:118.00px;font-size:15.60px;color:#cccccc;transform:scaleX(1.0019);">test.c</div>
<div class="t" style="left:84.65px;top:949.70px;font-size:14.02px;color:#cccccc;font-weight:bold;transform:scaleX(0.9588);">OUTLINE</div>
<div class="t" style="left:85.35px;top:977.80px;font-size:14.02px;color:#cccccc;font-weight:bold;transform:scaleX(0.9536);">TIMELINE</div>
<div class="t" style="left:81.88px;top:116.00px;font-size:17.28px;color:#519aba;font-weight:bold;transform:scaleX(0.8763);">C</div>
<div class="t" style="left:398.54px;top:53.20px;font-size:17.28px;color:#519aba;font-weight:bold;transform:scaleX(0.9294);">C</div>
<div class="t" style="left:406.05px;top:88.90px;font-size:17.28px;color:#519aba;font-weight:bold;transform:scaleX(0.9117);">C</div>
<div class="t" style="left:419.81px;top:54.50px;font-size:15.60px;color:#ffffff;font-style:italic;transform:scaleX(0.9699);">test.c</div>
<div class="t" style="left:427.76px;top:90.80px;font-size:15.60px;color:#a9a9a9;transform:scaleX(1.0101);">test.c</div>
<div class="t" style="left:601.67px;top:25.60px;font-size:15.60px;color:#989898;transform:scaleX(1.0324);">Select debugger</div>
<div class="t" style="left:605.93px;top:65.80px;font-size:15.60px;color:#cccccc;transform:scaleX(1.0312);">Web App (Chrome)</div>
<div class="t" style="left:1235.37px;top:65.80px;font-size:15.60px;color:#3794ff;transform:scaleX(1.0346);">Suggested</div>
<div class="t" style="left:605.47px;top:95.00px;font-size:15.60px;color:#cccccc;transform:scaleX(1.0382);">Node.js</div>
<div class="t" style="left:605.93px;top:121.00px;font-size:15.60px;color:#cccccc;transform:scaleX(1.0167);">Web App (Edge)</div>
<div class="t" style="left:605.33px;top:150.00px;font-size:15.60px;color:#cccccc;transform:scaleX(1.0196);">Install an extension for C...</div>
<div class="t" style="left:404.80px;top:694.10px;font-size:14.02px;color:#9d9d9d;transform:scaleX(0.8686);">PROBLEMS</div>
<div class="t" style="left:501.80px;top:694.10px;font-size:14.02px;color:#9d9d9d;transform:scaleX(0.8970);">OUTPUT</div>
<div class="t" style="left:583.39px;top:694.10px;font-size:14.02px;color:#9d9d9d;transform:scaleX(0.8795);">DEBUG CONSOLE</div>
<div class="t" style="left:720.82px;top:694.10px;font-size:14.02px;color:#e7e7e7;transform:scaleX(0.9032);">TERMINAL</div>
<div class="t" style="left:814.43px;top:694.10px;font-size:14.02px;color:#9d9d9d;transform:scaleX(0.8410);">PORTS</div>
<div class="t" style="left:1623.79px;top:694.10px;font-size:12.86px;color:#cccccc;transform:scaleX(1.0919);">powershell</div>
<div class="t" style="left:73.35px;top:1004.30px;font-size:15.17px;color:#cccccc;transform:scaleX(1.0895);">0</div>
<div class="t" style="left:107.66px;top:1004.30px;font-size:15.17px;color:#cccccc;transform:scaleX(1.0758);">0</div>
<div class="t" style="left:156.96px;top:1004.30px;font-size:15.17px;color:#cccccc;transform:scaleX(1.0758);">0</div>
<div class="t" style="left:1572.13px;top:1004.30px;font-size:15.17px;color:#cccccc;transform:scaleX(0.9432);">Ln 6, Col 2</div>
<div class="t" style="left:1661.18px;top:1004.30px;font-size:15.17px;color:#cccccc;transform:scaleX(0.9016);">Spaces: 4</div>
<div class="t" style="left:1741.70px;top:1004.30px;font-size:15.17px;color:#cccccc;transform:scaleX(0.9431);">UTF-8</div>
<div class="t" style="left:1801.25px;top:1004.30px;font-size:15.17px;color:#cccccc;transform:scaleX(0.8422);">CRLF</div>
<div class="t" style="left:1854.11px;top:1004.30px;font-size:15.17px;color:#cccccc;transform:scaleX(0.8953);">C</div>
<div class="t" style="left:110.57px;top:1043.90px;font-size:18.00px;color:#1c1c1c;transform:scaleX(0.9794);">Ara</div>
<div class="t" style="left:1792.48px;top:1031.90px;font-size:14.40px;color:#111111;transform:scaleX(0.9929);">22:40</div>
<div class="t" style="left:1775.59px;top:1055.00px;font-size:14.40px;color:#111111;transform:scaleX(0.9785);">24.01.2024</div>
<div class="t" style="left:1884.48px;top:1052.70px;font-size:14.40px;color:#111111;transform:scaleX(0.9081);">5</div>
</body>
</html>
